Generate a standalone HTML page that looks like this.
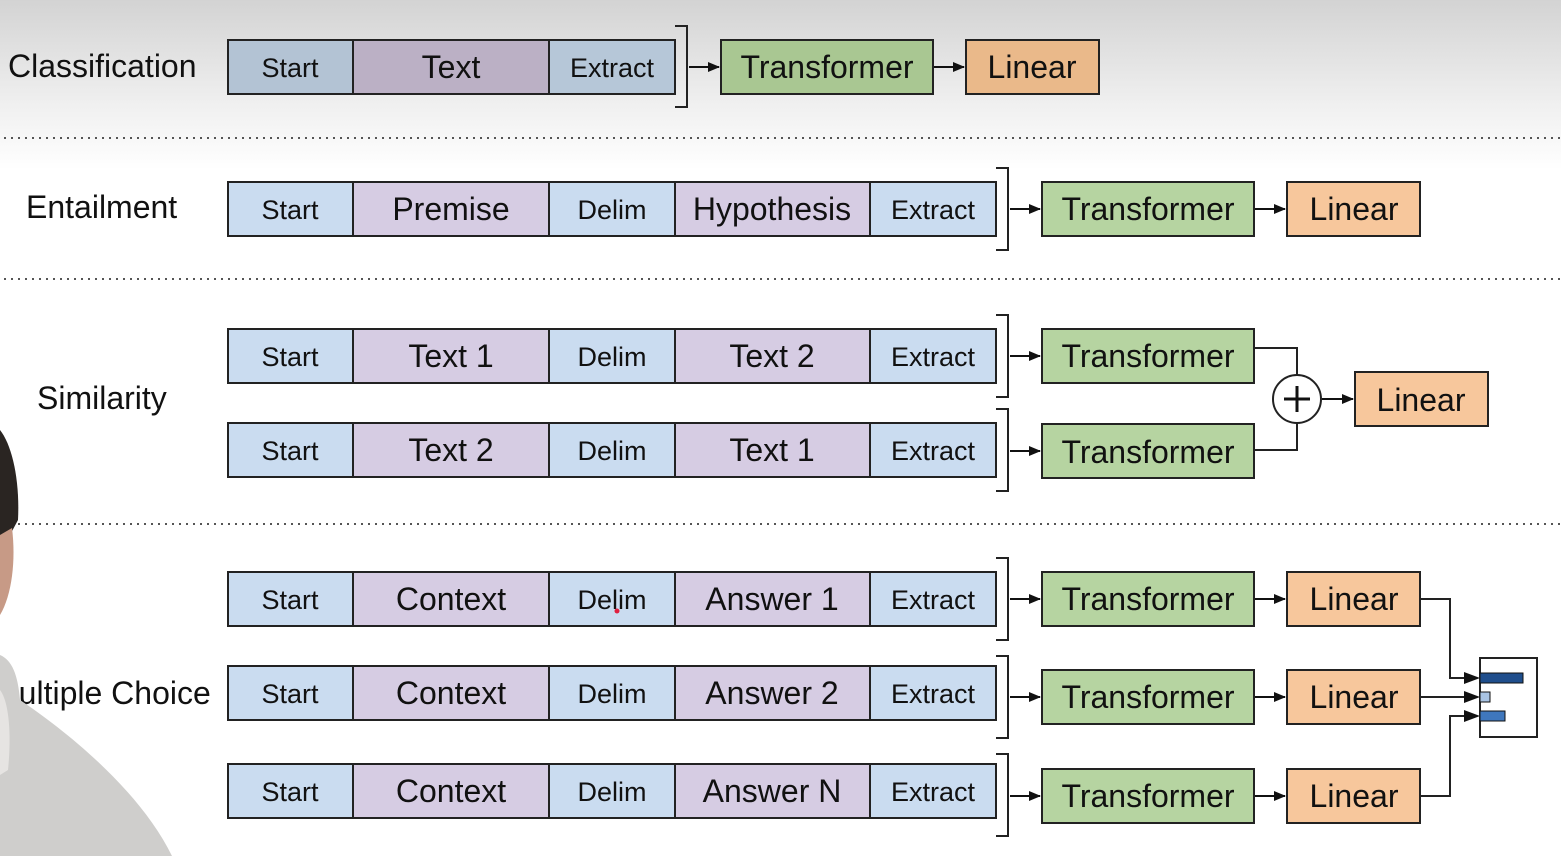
<!DOCTYPE html>
<html><head><meta charset="utf-8"><style>
html,body{margin:0;padding:0;width:1561px;height:856px;overflow:hidden;background:#fff}
svg text{font-family:"Liberation Sans",sans-serif;fill:#111}
.bl{fill:#cadcf0;stroke:#222;stroke-width:2}
.pu{fill:#d6cce3;stroke:#222;stroke-width:2}
.gr{fill:#b6d4a1;stroke:#222;stroke-width:2}
.or{fill:#f7c79c;stroke:#222;stroke-width:2}
.br{fill:none;stroke:#222;stroke-width:2}
.s{font-size:27px;text-anchor:middle}
.b{font-size:32px;text-anchor:middle}
</style></head><body>
<svg width="1561" height="856" viewBox="0 0 1561 856" xmlns="http://www.w3.org/2000/svg">
<defs>
<linearGradient id="bg" x1="0" y1="0" x2="0" y2="1">
<stop offset="0" stop-color="#d3d3d3"/><stop offset="0.6" stop-color="#efefef"/><stop offset="1" stop-color="#ffffff"/>
</linearGradient>
<marker id="ar" markerWidth="12" markerHeight="12" refX="11" refY="6" orient="auto" markerUnits="userSpaceOnUse"><path d="M0,1 L12,6 L0,11 z" fill="#111"/></marker>
</defs>
<rect x="0" y="0" width="1561" height="170" fill="url(#bg)"/>
<g stroke="#555" stroke-width="2" stroke-dasharray="2 5">
<line x1="4" y1="138" x2="1561" y2="138"/>
<line x1="4" y1="279" x2="1561" y2="279"/>
<line x1="18" y1="524" x2="1561" y2="524"/>
</g>
<g font-size="32">
<text x="8" y="77">Classification</text>
<text x="26" y="218">Entailment</text>
<text x="37" y="409">Similarity</text>
<text x="-8" y="704">Multiple Choice</text>
</g>
<!-- person -->
<path d="M0,430 C12,445 20,480 18,520 L10,535 L0,540 Z" fill="#2a2522"/>
<path d="M0,535 L12,528 C16,560 12,595 0,615 Z" fill="#c79a86"/>
<path d="M0,655 C12,660 18,675 20,700 C65,730 140,790 172,856 L0,856 Z" fill="#cfcecc"/>
<path d="M0,690 C8,700 12,730 8,770 L0,775 Z" fill="#e6e4e2"/>
<!-- classification -->
<g stroke="#222" stroke-width="2">
<rect x="228" y="40" width="125" height="54" fill="#b3c3d4"/>
<rect x="353" y="40" width="196" height="54" fill="#bbb0c5"/>
<rect x="549" y="40" width="126" height="54" fill="#b6c7d8"/>
<rect x="721" y="40" width="212" height="54" fill="#a9c792"/>
<rect x="966" y="40" width="133" height="54" fill="#eab98a"/>
</g>
<text class="s" x="290" y="77">Start</text><text class="s" x="612" y="77">Extract</text>
<text class="b" x="451" y="78">Text</text><text class="b" x="827" y="78">Transformer</text><text class="b" x="1032" y="78">Linear</text>
<path class="br" d="M675,26 H687 V107 H675"/>
<line x1="689" y1="67" x2="719" y2="67" stroke="#111" stroke-width="2" marker-end="url(#ar)"/>
<line x1="934" y1="67" x2="964" y2="67" stroke="#111" stroke-width="2" marker-end="url(#ar)"/>

<g transform="translate(0,182)">
<rect class="bl" x="228" y="0" width="125" height="54"/><rect class="pu" x="353" y="0" width="196" height="54"/><rect class="bl" x="549" y="0" width="126" height="54"/><rect class="pu" x="675" y="0" width="195" height="54"/><rect class="bl" x="870" y="0" width="126" height="54"/><rect class="gr" x="1042" y="0" width="212" height="54"/><rect class="or" x="1287" y="0" width="133" height="54"/>
<path class="br" d="M996,-14 H1008 V68 H996"/>
<line x1="1010" y1="27" x2="1040" y2="27" stroke="#111" stroke-width="2" marker-end="url(#ar)"/>
<line x1="1255" y1="27" x2="1285" y2="27" stroke="#111" stroke-width="2" marker-end="url(#ar)"/>
<text class="s" x="290" y="37">Start</text><text class="s" x="612" y="37">Delim</text><text class="s" x="933" y="37">Extract</text>
<text class="b" x="451" y="38">Premise</text><text class="b" x="772" y="38">Hypothesis</text><text class="b" x="1148" y="38">Transformer</text><text class="b" x="1354" y="38">Linear</text>
</g>
<g transform="translate(0,329)">
<rect class="bl" x="228" y="0" width="125" height="54"/><rect class="pu" x="353" y="0" width="196" height="54"/><rect class="bl" x="549" y="0" width="126" height="54"/><rect class="pu" x="675" y="0" width="195" height="54"/><rect class="bl" x="870" y="0" width="126" height="54"/><rect class="gr" x="1042" y="0" width="212" height="54"/>
<path class="br" d="M996,-14 H1008 V68 H996"/>
<line x1="1010" y1="27" x2="1040" y2="27" stroke="#111" stroke-width="2" marker-end="url(#ar)"/>
<text class="s" x="290" y="37">Start</text><text class="s" x="612" y="37">Delim</text><text class="s" x="933" y="37">Extract</text>
<text class="b" x="451" y="38">Text 1</text><text class="b" x="772" y="38">Text 2</text><text class="b" x="1148" y="38">Transformer</text>
</g>
<g transform="translate(0,423)">
<rect class="bl" x="228" y="0" width="125" height="54"/><rect class="pu" x="353" y="0" width="196" height="54"/><rect class="bl" x="549" y="0" width="126" height="54"/><rect class="pu" x="675" y="0" width="195" height="54"/><rect class="bl" x="870" y="0" width="126" height="54"/><rect class="gr" x="1042" y="1" width="212" height="54"/>
<path class="br" d="M996,-14 H1008 V68 H996"/>
<line x1="1010" y1="28" x2="1040" y2="28" stroke="#111" stroke-width="2" marker-end="url(#ar)"/>
<text class="s" x="290" y="37">Start</text><text class="s" x="612" y="37">Delim</text><text class="s" x="933" y="37">Extract</text>
<text class="b" x="451" y="38">Text 2</text><text class="b" x="772" y="38">Text 1</text><text class="b" x="1148" y="40">Transformer</text>
</g>
<g transform="translate(0,572)">
<rect class="bl" x="228" y="0" width="125" height="54"/><rect class="pu" x="353" y="0" width="196" height="54"/><rect class="bl" x="549" y="0" width="126" height="54"/><rect class="pu" x="675" y="0" width="195" height="54"/><rect class="bl" x="870" y="0" width="126" height="54"/><rect class="gr" x="1042" y="0" width="212" height="54"/><rect class="or" x="1287" y="0" width="133" height="54"/>
<path class="br" d="M996,-14 H1008 V68 H996"/>
<line x1="1010" y1="27" x2="1040" y2="27" stroke="#111" stroke-width="2" marker-end="url(#ar)"/>
<line x1="1255" y1="27" x2="1285" y2="27" stroke="#111" stroke-width="2" marker-end="url(#ar)"/>
<text class="s" x="290" y="37">Start</text><text class="s" x="612" y="37">Delim</text><text class="s" x="933" y="37">Extract</text>
<text class="b" x="451" y="38">Context</text><text class="b" x="772" y="38">Answer 1</text><text class="b" x="1148" y="38">Transformer</text><text class="b" x="1354" y="38">Linear</text>
<circle cx="617" cy="39" r="2.5" fill="#e02040"/>
</g>
<g transform="translate(0,666)">
<rect class="bl" x="228" y="0" width="125" height="54"/><rect class="pu" x="353" y="0" width="196" height="54"/><rect class="bl" x="549" y="0" width="126" height="54"/><rect class="pu" x="675" y="0" width="195" height="54"/><rect class="bl" x="870" y="0" width="126" height="54"/><rect class="gr" x="1042" y="4" width="212" height="54"/><rect class="or" x="1287" y="4" width="133" height="54"/>
<path class="br" d="M996,-10 H1008 V72 H996"/>
<line x1="1010" y1="31" x2="1040" y2="31" stroke="#111" stroke-width="2" marker-end="url(#ar)"/>
<line x1="1255" y1="31" x2="1285" y2="31" stroke="#111" stroke-width="2" marker-end="url(#ar)"/>
<text class="s" x="290" y="37">Start</text><text class="s" x="612" y="37">Delim</text><text class="s" x="933" y="37">Extract</text>
<text class="b" x="451" y="38">Context</text><text class="b" x="772" y="38">Answer 2</text><text class="b" x="1148" y="42">Transformer</text><text class="b" x="1354" y="42">Linear</text>
</g>
<g transform="translate(0,764)">
<rect class="bl" x="228" y="0" width="125" height="54"/><rect class="pu" x="353" y="0" width="196" height="54"/><rect class="bl" x="549" y="0" width="126" height="54"/><rect class="pu" x="675" y="0" width="195" height="54"/><rect class="bl" x="870" y="0" width="126" height="54"/><rect class="gr" x="1042" y="5" width="212" height="54"/><rect class="or" x="1287" y="5" width="133" height="54"/>
<path class="br" d="M996,-10 H1008 V72 H996"/>
<line x1="1010" y1="32" x2="1040" y2="32" stroke="#111" stroke-width="2" marker-end="url(#ar)"/>
<line x1="1255" y1="32" x2="1285" y2="32" stroke="#111" stroke-width="2" marker-end="url(#ar)"/>
<text class="s" x="290" y="37">Start</text><text class="s" x="612" y="37">Delim</text><text class="s" x="933" y="37">Extract</text>
<text class="b" x="451" y="38">Context</text><text class="b" x="772" y="38">Answer N</text><text class="b" x="1148" y="43">Transformer</text><text class="b" x="1354" y="43">Linear</text>
</g>
<path d="M1254,348 H1297 V375 M1254,450 H1297 V423" fill="none" stroke="#222" stroke-width="2"/>
<circle cx="1297" cy="399" r="24" fill="#fff" stroke="#222" stroke-width="2"/>
<path d="M1284,399 H1310 M1297,386 V412" stroke="#111" stroke-width="3"/>
<line x1="1322" y1="399" x2="1353" y2="399" stroke="#111" stroke-width="2" marker-end="url(#ar)"/>
<rect class="or" x="1355" y="372" width="133" height="54"/>
<text class="b" x="1421" y="411">Linear</text>
<path d="M1420,599 H1450 V678 H1470 M1420,697 H1470 M1420,796 H1450 V716 H1470" fill="none" stroke="#222" stroke-width="2"/>
<path d="M1464,672 L1480,678 L1464,684z M1464,691 L1480,697 L1464,703z M1464,710 L1480,716 L1464,722z" fill="#111"/>
<rect x="1480" y="658" width="57" height="79" fill="#fff" stroke="#222" stroke-width="2"/>
<rect x="1480" y="673" width="43" height="10" fill="#1f4e8c" stroke="#111" stroke-width="1"/>
<rect x="1480" y="692" width="10" height="10" fill="#a9c4e4" stroke="#111" stroke-width="1"/>
<rect x="1480" y="711" width="25" height="10" fill="#3f77bd" stroke="#111" stroke-width="1"/>
</svg>
</body></html>
